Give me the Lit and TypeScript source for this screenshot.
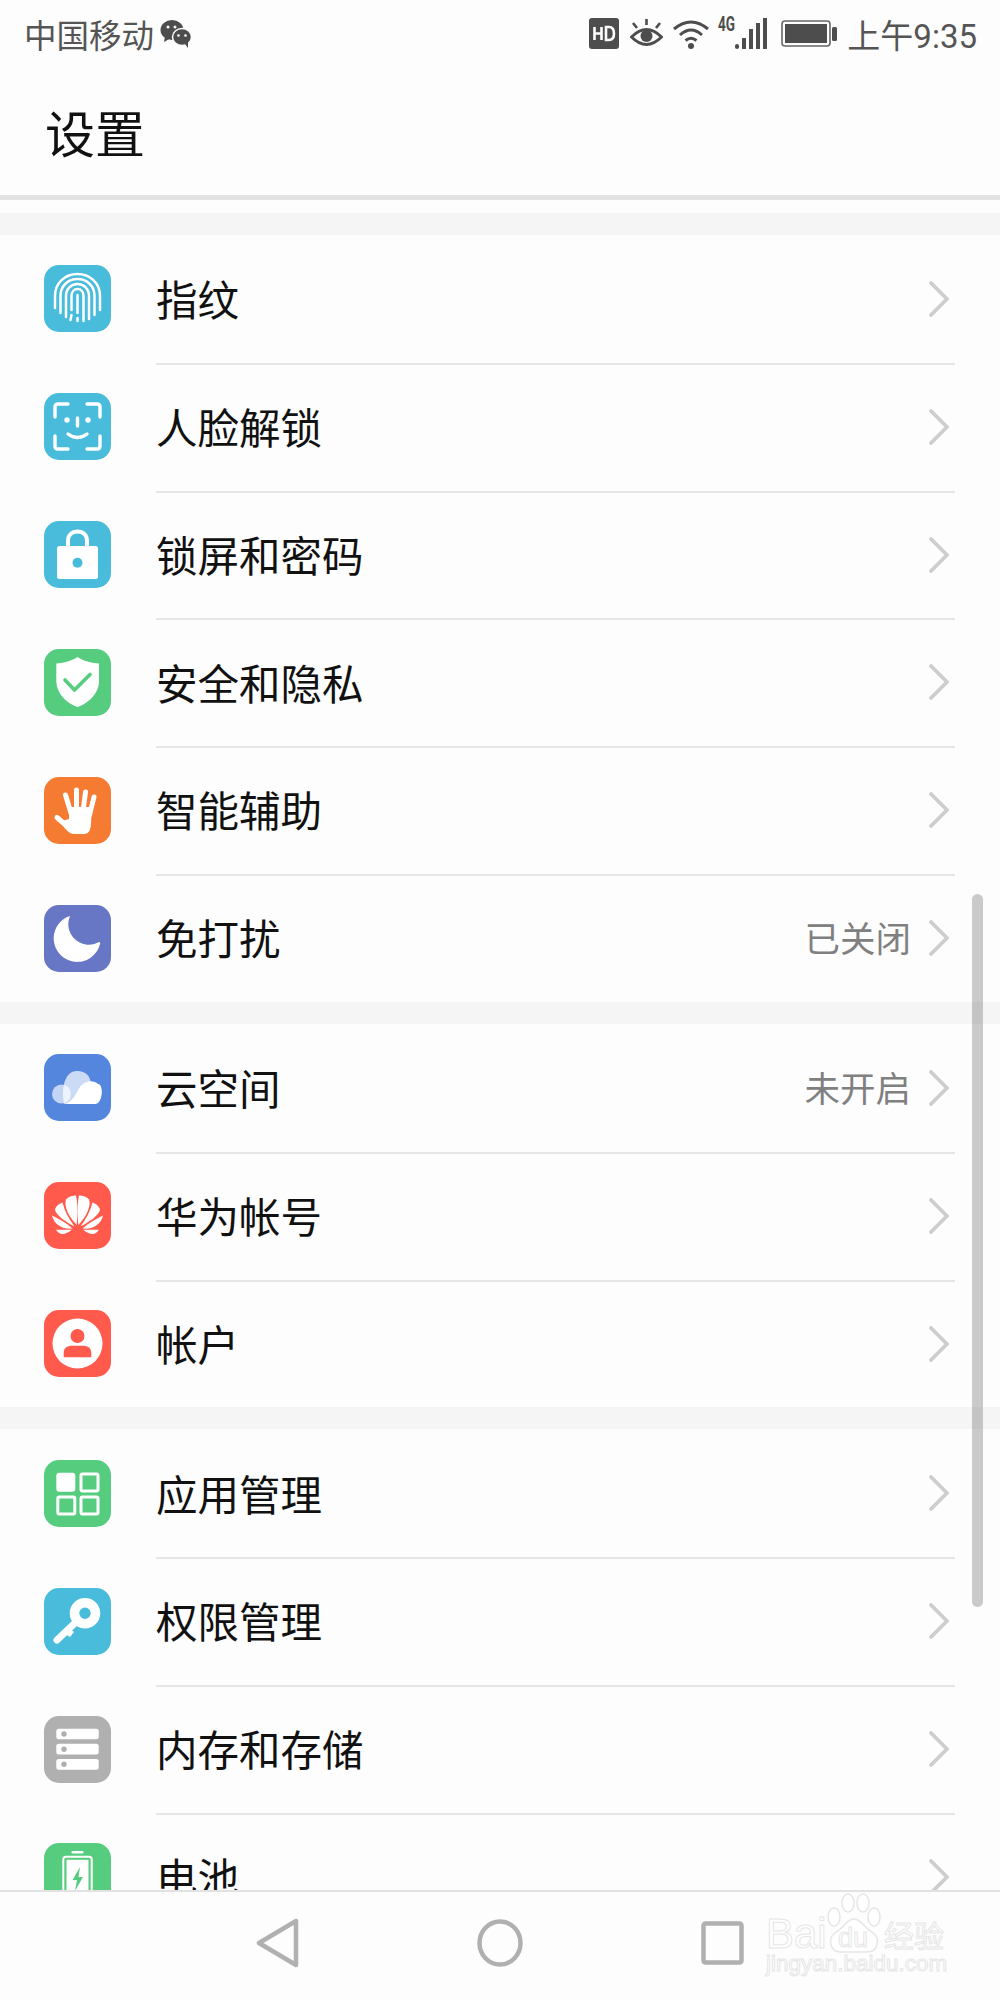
import { LitElement, html, css, svg, nothing } from "lit";
import { customElement } from "lit/decorators.js";

const W = "#ffffff";
const TEAL = "#49bbdb", GREEN = "#56cd7e", ORANGE = "#f57b32", INDIGO = "#6776c5", BLUE = "#5486de", RED = "#ff5a4c", GREY = "#b0b0b0";

const petals = svg`
  <path d="M32.6 43C25 35 19.500 24 22 17.500C24 15 28 13.500 32 13.500C33.800 22 33.800 33 32.600 43Z"/>
  <path d="M30.500 44.500C22 40 11.500 33 11 27.500C12 24 15.500 21.500 18.500 20.500C20.500 29 25 37 30.500 44.500Z"/>
  <path d="M28.500 46.500C20 47.500 10.500 44 8 33.500C14 36.500 22.500 41 28.500 46.500Z"/>
  <path d="M12 47.800H27.800C24.500 50.500 20.500 52.500 17.500 52C15 51.500 13 49.500 12 47.800Z"/>`;

const icons: Record<string, unknown> = {
  finger: svg`<g fill="none" stroke="${W}" stroke-width="2.500" stroke-linecap="round">
    <path d="M11 43V31C11 18 21 9 33.500 9S56 18 56 31V45"/>
    <path d="M16.500 48V31C16.500 21 24 14 33.500 14S50.500 21 50.500 31V50"/>
    <path d="M22 52V31C22 24 27 19 33.500 19S45 24 45 31V54"/>
    <path d="M27.500 45V31C27.500 27 30 24 33.500 24S39.500 27 39.500 31V56"/>
    <path d="M33.500 30V48M33.500 53V56M27.500 50L26.500 55"/></g>`,
  face: svg`<g fill="none" stroke="${W}" stroke-width="3.400" stroke-linecap="round">
    <path d="M11 24V14Q11 11 14 11H24M43 11H53Q56 11 56 14V24M11 43V53Q11 56 14 56H24M43 56H53Q56 56 56 53V43"/>
    <path d="M33.500 25V33"/><path d="M24 41Q33.500 48 43 41"/></g>
    <circle cx="23" cy="27" r="2.700" fill="${W}"/><circle cx="44" cy="27" r="2.700" fill="${W}"/>`,
  lock: svg`<path d="M24 26V20C24 14 28 10.500 33.500 10.500S43 14 43 20V26" fill="none" stroke="${W}" stroke-width="4"/>
    <rect x="13" y="25" width="41" height="33" rx="2.500" fill="${W}"/><circle cx="33.500" cy="41.700" r="5" fill="${TEAL}"/>`,
  shield: svg`<path d="M33.500 8L37 10C42 12.500 48 14 55 14.500V32C55 44 45 54 33.500 58C22 54 12.300 44 12.300 32V14.500C19 14 25 12.500 30 10Z" fill="${W}"/>
    <path d="M21 31L30.500 41L46 25.500" fill="none" stroke="${GREEN}" stroke-width="3.600" stroke-linecap="round" stroke-linejoin="round"/>`,
  hand: svg`<g stroke="${W}" stroke-width="5" stroke-linecap="round" fill="none">
      <path d="M21.500 18L27 36"/><path d="M32.500 13V34"/><path d="M41.500 15L39 34"/><path d="M50 20L45.500 38"/><path d="M13 40.500L24 50"/></g>
    <path d="M25 30H48L47 46Q47 56 41 57H30C26 57 23 54 20 50L18 44L25 42Z" fill="${W}"/>`,
  moon: svg`<path d="M26 11A23.500 23.500 0 1 0 56 39C57 37.500 55 37 54 37.500A20.500 20.500 0 0 1 26 11Z" fill="${W}"/>`,
  cloud: svg`<circle cx="17.500" cy="40" r="9.500" fill="${W}" fill-opacity=".65"/>
    <path d="M20 50C17 36 20 17 33 17C42 17 46 22 47 30L42 50Z" fill="${W}" fill-opacity=".7"/>
    <path d="M22 50C30 46 32 39 36 33C40 27 49 25 54 30C60 30 59 50 51 50Z" fill="${W}"/>`,
  huawei: svg`<g fill="${W}">${petals}<g transform="translate(67 0) scale(-1 1)">${petals}</g></g>`,
  user: svg`<circle cx="33.500" cy="33.500" r="25" fill="${W}"/><circle cx="33.500" cy="26" r="7" fill="${RED}"/>
    <path d="M19.700 47.300V43C19.700 38 23 35.700 28 35.700H39C44 35.700 47.300 38 47.300 43V47.300Z" fill="${RED}"/>`,
  apps: svg`<rect x="12.300" y="12.700" width="19" height="19" rx="3" fill="${W}"/>
    <g fill="none" stroke="${W}" stroke-width="3"><rect x="37" y="14" width="17" height="17" rx="1.500"/><rect x="13.800" y="37" width="17" height="17" rx="1.500"/><rect x="37" y="37" width="17" height="17" rx="1.500"/></g>`,
  key: svg`<circle cx="41" cy="25.300" r="10.500" fill="none" stroke="${W}" stroke-width="9.600"/>
    <path d="M32 34L13 52" stroke="${W}" stroke-width="7" stroke-linecap="round"/>
    <path d="M21 46L26 49L30 44L25 40Z" fill="${W}"/>`,
  storage: svg`<g fill="${W}"><rect x="12.300" y="12.700" width="42.400" height="10.600" rx="2.500"/><rect x="12.300" y="27.800" width="42.400" height="10.800" rx="2.500"/><rect x="12.300" y="43" width="42.400" height="10.700" rx="2.500"/></g>
    <g fill="${GREY}"><circle cx="20" cy="18" r="2.700"/><circle cx="20" cy="33.200" r="2.700"/><circle cx="20" cy="48.300" r="2.700"/></g>`,
  battery: svg`<rect x="27.500" y="8" width="12" height="2.600" rx="1.300" fill="${W}"/>
    <rect x="19.300" y="13.700" width="28.400" height="50" rx="2.500" fill="none" stroke="${W}" stroke-width="2"/>
    <rect x="22.500" y="16.800" width="22" height="45" fill="${W}"/>
    <path d="M36 24L28.500 37H33L31 48L39 34H34.500Z" fill="${GREEN}"/>`,
};

type Row = { icon: string; bg: string; label: string; value?: string };
const sections: Row[][] = [
  [
    { icon: "finger", bg: TEAL, label: "指纹" },
    { icon: "face", bg: TEAL, label: "人脸解锁" },
    { icon: "lock", bg: TEAL, label: "锁屏和密码" },
    { icon: "shield", bg: GREEN, label: "安全和隐私" },
    { icon: "hand", bg: ORANGE, label: "智能辅助" },
    { icon: "moon", bg: INDIGO, label: "免打扰", value: "已关闭" },
  ],
  [
    { icon: "cloud", bg: BLUE, label: "云空间", value: "未开启" },
    { icon: "huawei", bg: RED, label: "华为帐号" },
    { icon: "user", bg: RED, label: "帐户" },
  ],
  [
    { icon: "apps", bg: GREEN, label: "应用管理" },
    { icon: "key", bg: TEAL, label: "权限管理" },
    { icon: "storage", bg: GREY, label: "内存和存储" },
    { icon: "battery", bg: GREEN, label: "电池" },
  ],
];

@customElement("app-root")
export class AppRoot extends LitElement {
  static styles = css`
    :host {
      display: flex; flex-direction: column; position: relative;
      width: 1000px; height: 2000px; overflow: hidden; background: #fdfdfd;
      font-family: "Noto Sans CJK SC", "Noto Sans", sans-serif; color: #111;
    }
    .status { height: 67px; display: flex; align-items: center; justify-content: space-between; padding: 0 23px 0 24px; color: #555; font-size: 33px; flex: none; }
    .status-left, .status-right { display: flex; align-items: center; }
    .carrier { font-size: 32.500px; }
    .wechat { margin-left: 6px; }
    .hd { margin-right: 11px; }
    .eye { margin-right: 10px; }
    .wifi { margin-right: 9px; }
    .cell { margin-right: 14px; margin-top: -3px; overflow: visible; }
    .batt { margin-right: 10px; }
    .time b { font-family: Roboto, sans-serif; font-weight: 400; }
    .title { height: 133px; padding-left: 45px; display: flex; align-items: center; font-size: 50px; line-height: 1; box-sizing: border-box; border-bottom: 5px solid #e2e2e2; flex: none; }
    .content { flex: 1; min-height: 0; overflow: hidden; padding-top: 13px; }
    .gap { height: 22px; background: #f5f5f5; }
    .row { display: flex; align-items: center; height: 127.830px; padding-left: 44px; box-sizing: border-box; }
    .ico { width: 67px; height: 67px; border-radius: 15px; flex: none; margin-right: 45px; display: block; }
    .body { flex: 1; height: calc(100% + 4px); margin-right: 45px; display: flex; align-items: center; box-sizing: border-box; font-size: 41.500px; line-height: 1; padding-right: 6px; }
    .line { border-bottom: 2px solid #e6e6e6; padding-top: 2px; }
    .label { flex: 1; }
    .value { font-size: 35.500px; color: #808080; margin-right: 18px; margin-top: -3px; }
    .chev { display: block; flex: none; }
    .nav { height: 110px; flex: none; border-top: 2px solid #e2e2e2; box-sizing: border-box; background: #fdfdfd; display: flex; align-items: center; padding: 0 0 6px 256px; }
    .nav-back { margin-right: 177px; }
    .nav-home { margin-right: 178px; }
    .scroll { position: absolute; left: 972px; top: 894px; width: 11px; height: 713px; border-radius: 6px; background: rgba(0,0,0,.2); }
    .mark { position: absolute; left: 766px; top: 1893px; width: 182px; height: 88px; color: #fff; -webkit-text-stroke: 1px #e6e6e6; font-family: "Liberation Sans", sans-serif; }
    .mark span { position: absolute; line-height: 1; white-space: nowrap; }
    .paw { position: absolute; left: 61px; top: 0; }
    .m-bai { left: 0; top: 20px; font-size: 42px; }
    .m-du { left: 72px; top: 32px; font-size: 27px; }
    .m-jy { left: 118px; top: 26px; font-size: 30px; font-family: "Noto Sans CJK SC", sans-serif; }
    .m-url { left: 0; top: 60px; font-size: 22.500px; }
  `;

  private row(r: Row, last: boolean) {
    return html`<div class="row">
      <svg class="ico" viewBox="0 0 67 67" style="background:${r.bg}">${icons[r.icon]}</svg>
      <div class="body ${last ? "" : "line"}">
        <span class="label">${r.label}</span>
        ${r.value ? html`<span class="value">${r.value}</span>` : nothing}
        <svg class="chev" width="20" height="36" viewBox="0 0 20 36"><path d="M2 2L18 18L2 34" fill="none" stroke="#cdcdcd" stroke-width="3.800" stroke-linecap="round" stroke-linejoin="round"/></svg>
      </div>
    </div>`;
  }

  render() {
    return html`
      <div class="status">
        <div class="status-left">
          <span class="carrier">中国移动</span>
          <svg class="wechat" width="32" height="28" viewBox="0 0 32 28" fill="#4d4d4d">
            <ellipse cx="12" cy="10" rx="11.500" ry="10"/><path d="M5 16L4 22L11 18Z"/>
            <ellipse cx="22" cy="17" rx="9.500" ry="8.500" stroke="#fdfdfd" stroke-width="1.500"/><path d="M25 24L28 28L28 21Z"/>
            <circle cx="8" cy="7" r="1.500" fill="#fdfdfd"/><circle cx="15" cy="7" r="1.500" fill="#fdfdfd"/>
            <circle cx="18.500" cy="15.500" r="1.300" fill="#fdfdfd"/><circle cx="25.500" cy="15.500" r="1.300" fill="#fdfdfd"/>
          </svg>
        </div>
        <div class="status-right">
          <svg class="hd" width="30" height="31" viewBox="0 0 30 31"><rect width="30" height="31" rx="3" fill="#4d4d4d"/>
            <path d="M5.500 9V22M12.500 9V22M5.500 15.500H12.500" stroke="#fdfdfd" stroke-width="2.600" fill="none"/>
            <path d="M17 9V22H20C23.500 22 25 19.500 25 15.500S23.500 9 20 9Z" stroke="#fdfdfd" stroke-width="2.600" fill="none"/></svg>
          <svg class="eye" width="33" height="30" viewBox="0 0 33 30"><path d="M1.500 18Q16.500 3 31.500 18Q16.500 33 1.500 18Z" fill="none" stroke="#4d4d4d" stroke-width="3"/><circle cx="16.500" cy="17" r="6" fill="#4d4d4d"/>
            <path d="M3 4L7 9M16.500 0V6M30 4L26 9" stroke="#4d4d4d" stroke-width="2.600" fill="none"/></svg>
          <svg class="wifi" width="36" height="30" viewBox="0 0 36 30" fill="none" stroke="#4d4d4d" stroke-width="3"><path d="M1 10Q18 -4 35 10"/><path d="M7 16Q18 6 29 16"/><path d="M12.500 21.500Q18 17 23.500 21.500"/><circle cx="18" cy="27" r="3" fill="#4d4d4d" stroke="none"/></svg>
          <svg class="cell" width="49" height="36" viewBox="0 0 49 36"><text x="0" y="17" font-size="20" font-family="Roboto, sans-serif" font-weight="700" fill="#4d4d4d" textLength="17" lengthAdjust="spacingAndGlyphs">4G</text>
            <g fill="#4d4d4d"><rect x="17" y="30" width="4" height="5" rx="2"/><rect x="24" y="24" width="4" height="11"/><rect x="31" y="15" width="4" height="20"/><rect x="38" y="9" width="4" height="26"/><rect x="45" y="4" width="4" height="31"/></g></svg>
          <svg class="batt" width="56" height="27" viewBox="0 0 56 27"><rect x="1" y="1" width="48" height="25" rx="3" fill="none" stroke="#666" stroke-width="1.600"/><rect x="4" y="4" width="42" height="19" fill="#4d4d4d"/><rect x="51" y="7" width="5" height="14" rx="1.500" fill="#4d4d4d"/></svg>
          <span class="time">上午<b>9:35</b></span>
        </div>
      </div>
      <div class="title">设置</div>
      <div class="content">
        ${sections.map((s) => html`<div class="gap"></div>${s.map((r, i) => this.row(r, i === s.length - 1))}`)}
      </div>
      <div class="nav">
        <svg class="nav-back" width="44" height="50" viewBox="0 0 44 50"><path d="M3 25L40 3V47Z" fill="none" stroke="#b0b0b0" stroke-width="4.500" stroke-linejoin="round"/></svg>
        <svg class="nav-home" width="46" height="48" viewBox="0 0 46 48"><ellipse cx="23" cy="24" rx="20.500" ry="21.500" fill="none" stroke="#b0b0b0" stroke-width="4.500"/></svg>
        <svg width="43" height="44" viewBox="0 0 43 44"><rect x="2.500" y="2.500" width="38" height="39" rx="2" fill="none" stroke="#b0b0b0" stroke-width="4.500"/></svg>
      </div>
      <div class="scroll"></div>
      <div class="mark">
        <svg class="paw" width="54" height="60" viewBox="0 0 54 60" fill="#fff" stroke="#e6e6e6" stroke-width="1.500">
          <ellipse cx="7" cy="24" rx="6" ry="9"/><ellipse cx="21" cy="10" rx="6" ry="9"/><ellipse cx="36" cy="10" rx="6" ry="9"/><ellipse cx="47" cy="24" rx="6" ry="9"/>
          <path d="M27 26C20 26 18 34 8 40C1 45 2 59 14 59H40C52 59 53 45 46 40C36 34 34 26 27 26Z"/>
        </svg>
        <span class="m-bai">Bai</span><span class="m-du">du</span><span class="m-jy">经验</span><span class="m-url">jingyan.baidu.com</span>
      </div>
    `;
  }
}
